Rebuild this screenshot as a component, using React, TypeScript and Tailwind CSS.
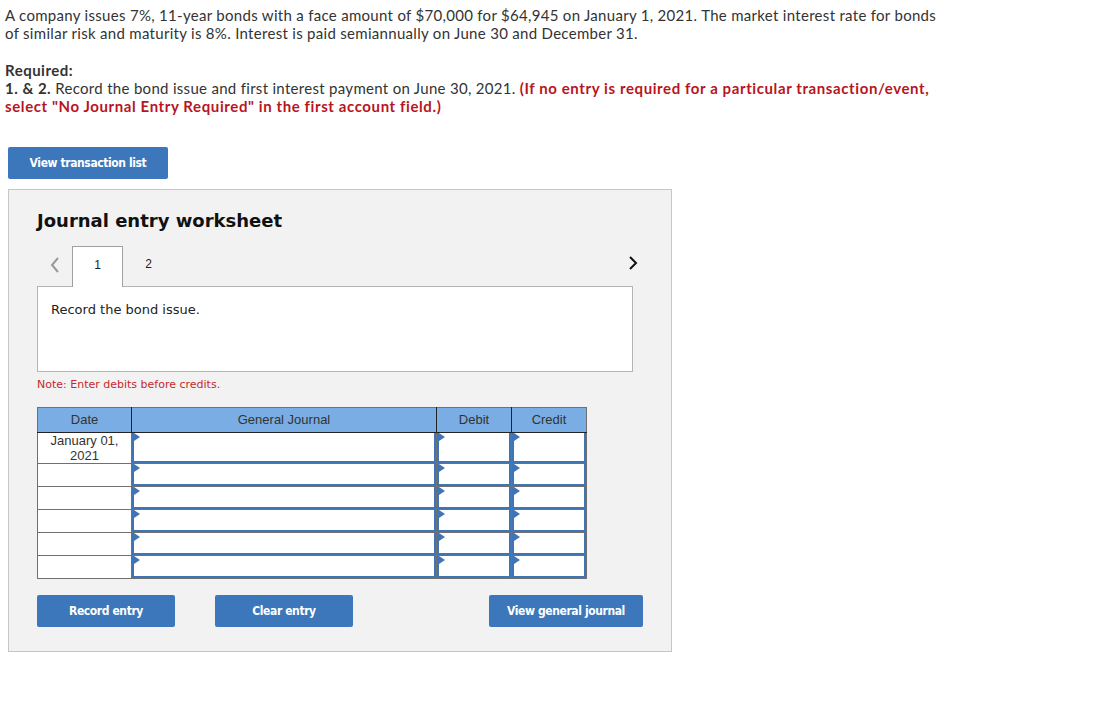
import React from "react";

const rows = [
  { date: "January 01,\n2021", tall: true },
  { date: "", tall: false },
  { date: "", tall: false },
  { date: "", tall: false },
  { date: "", tall: false },
  { date: "", tall: false },
];

function InputCell({ w }: { w: string }) {
  return (
    <td className={`relative border border-[#707070] p-0 ${w}`}>
      <div className="absolute inset-0 border-2 border-t-0 border-[#3f74b6] bg-white">
        <span className="absolute left-0 top-0 h-0 w-0 border-y-[4px] border-l-[6px] border-y-transparent border-l-[#3f74b6]" />
      </div>
    </td>
  );
}

function BlueButton({ label, w }: { label: string; w: string }) {
  return (
    <button
      className={`h-[32px] ${w} rounded-[2px] bg-[#3b77ba] text-[12px] font-bold tracking-[-0.4px] text-white`}
      style={{ fontFamily: '"DejaVu Sans Condensed", "Arial Narrow", "Liberation Sans", sans-serif' }}
    >
      {label}
    </button>
  );
}

export default function App() {
  return (
    <div className="min-h-[706px] bg-white pl-[5px] pt-[6px]">
      <div className="text-[15px] leading-[18px] tracking-[0.3px] text-[#333]" style={{ fontFamily: "Lato, sans-serif" }}>
        <p>
          A company issues 7%, 11-year bonds with a face amount of $70,000 for $64,945 on January 1, 2021. The market interest rate for bonds
          <br />
          of similar risk and maturity is 8%. Interest is paid semiannually on June 30 and December 31.
        </p>
        <p className="mt-[19px] font-bold tracking-[0.5px]">Required:</p>
        <p>
          <span className="font-bold tracking-[0.5px]">1. &amp; 2.</span> Record the bond issue and first interest payment on June 30, 2021.{" "}
          <span className="font-bold tracking-[0.6px] text-[#b8151e]">
            (If no entry is required for a particular transaction/event,
            <br />
            select "No Journal Entry Required" in the first account field.)
          </span>
        </p>
      </div>

      <div className="ml-[3px] mt-[32px]">
        <BlueButton label="View transaction list" w="w-[160px]" />
      </div>

      <div className="ml-[3px] mt-[10px] h-[463px] w-[664px] border border-[#c6c6c6] bg-[#f2f2f2] px-[28px] pt-[19px]" style={{ fontFamily: '"DejaVu Sans", Verdana, sans-serif' }}>
        <h2 className="text-[18px] font-bold leading-[24px] text-[#111]">Journal entry worksheet</h2>

        <div className="mt-[13px] flex items-end">
          <div className="flex h-[40px] w-[35px] items-center justify-center pb-[2px] text-[#888]">
            <svg width="12" height="18" viewBox="0 0 12 18"><path d="M9 2 L3 9 L9 16" fill="none" stroke="#999" strokeWidth="2" /></svg>
          </div>
          <div className="relative z-10 -mb-px flex h-[41px] w-[51px] items-center justify-center border border-b-0 border-[#a0a0a0] bg-white pb-[4px] text-[12px] text-[#222]" style={{ fontFamily: '"Liberation Sans", Arial, sans-serif' }}>1</div>
          <div className="flex h-[40px] w-[51px] items-center justify-center pb-[4px] text-[12px] text-[#222]" style={{ fontFamily: '"Liberation Sans", Arial, sans-serif' }}>2</div>
          <div className="flex-1" />
          <div className="flex h-[40px] w-[20px] items-center justify-center pb-[6px]">
            <svg width="12" height="18" viewBox="0 0 12 18"><path d="M3 3 L9 9 L3 15" fill="none" stroke="#111" strokeWidth="2" /></svg>
          </div>
        </div>

        <div className="h-[86px] w-[596px] border border-[#b4b4b4] bg-white px-[13px] pt-[13px] text-[13px] text-[#222]">
          Record the bond issue.
        </div>

        <p className="mt-[5px] text-[11px] text-[#c8282d]">Note: Enter debits before credits.</p>

        <table className="mt-[13px] border-collapse text-[13px] text-[#333]" style={{ fontFamily: '"Liberation Sans", Arial, sans-serif' }}>
          <thead>
            <tr className="h-[25px] bg-[#7aade3]">
              <th className="w-[94px] border border-[#707070] border-b-[#222] border-r-[#222] font-normal">Date</th>
              <th className="w-[305px] border border-[#707070] border-b-[#222] border-r-[#222] font-normal">General Journal</th>
              <th className="w-[75px] border border-[#707070] border-b-[#222] border-r-[#222] font-normal">Debit</th>
              <th className="w-[75px] border border-[#707070] border-b-[#222] font-normal">Credit</th>
            </tr>
          </thead>
          <tbody>
            {rows.map((r, i) => (
              <tr key={i} className={r.tall ? "h-[31px]" : "h-[23px]"}>
                <td className="whitespace-pre-line border border-[#707070] bg-white p-0 text-center align-top leading-[15px]">{r.date}</td>
                <InputCell w="w-[305px]" />
                <InputCell w="w-[75px]" />
                <InputCell w="w-[75px]" />
              </tr>
            ))}
          </tbody>
        </table>

        <div className="mt-[16px] flex">
          <BlueButton label="Record entry" w="w-[138px]" />
          <div className="w-[40px]" />
          <BlueButton label="Clear entry" w="w-[138px]" />
          <div className="w-[136px]" />
          <BlueButton label="View general journal" w="w-[154px]" />
        </div>
      </div>
    </div>
  );
}
